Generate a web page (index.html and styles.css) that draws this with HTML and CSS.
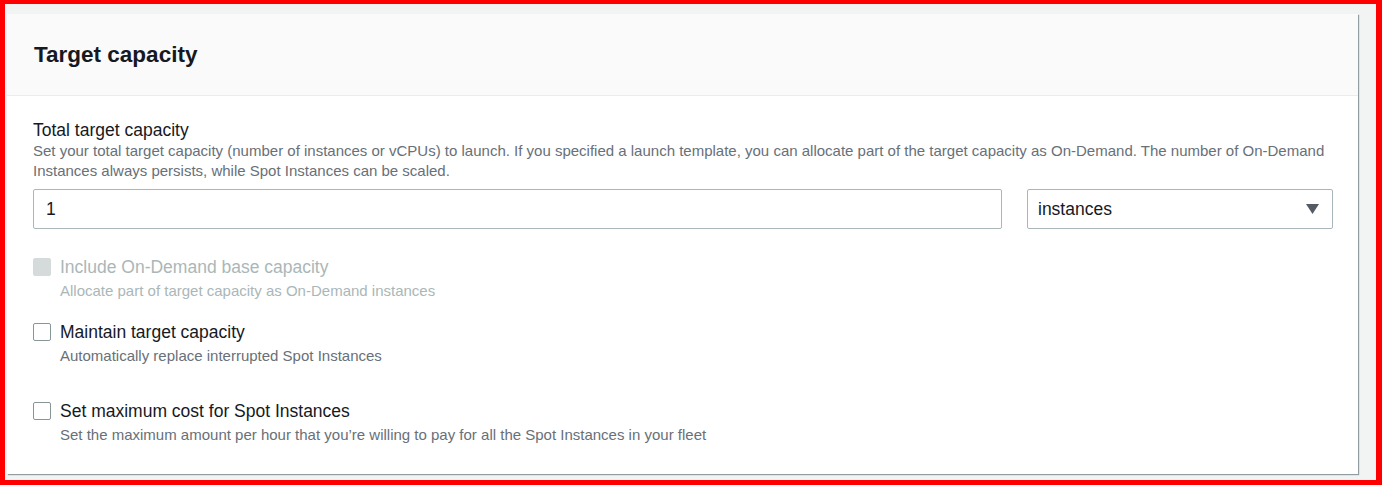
FILE: index.html
```html
<!DOCTYPE html>
<html lang="en">
  <head>
    <meta charset="UTF-8" />
    <meta name="viewport" content="width=device-width, initial-scale=1.0" />
    <title>Spot Fleet - Target capacity</title>
    <link rel="stylesheet" href="styles.css">
  </head>
  <body>
    <div class="frame">
      <div class="panel">
        <div class="panel-header">
          <h2 class="panel-title">Target capacity</h2>
        </div>
        <div class="panel-body">
          <div class="field">
            <label class="field-label" for="capacity">Total target capacity</label>
            <p class="field-desc">
              Set your total target capacity (number of instances or vCPUs) to launch. If you specified a launch template, you can allocate part of the target capacity as On-Demand. The number of On-Demand Instances always persists, while Spot Instances can be scaled.
            </p>
            <div class="field-controls">
              <input id="capacity" class="text-input" type="text" value="1" />
              <div class="select">
                <span>instances</span>
                <svg class="select-caret" width="13" height="10" viewBox="0 0 13 10">
                  <path d="M0 0 H13 L6.5 10 Z" fill="#545b64" />
                </svg>
              </div>
            </div>
          </div>

          <div class="check-row is-disabled">
            <span class="checkbox"></span>
            <div class="check-text">
              <div class="check-label">Include On-Demand base capacity</div>
              <div class="check-desc">Allocate part of target capacity as On-Demand instances</div>
            </div>
          </div>

          <div class="check-row">
            <span class="checkbox"></span>
            <div class="check-text">
              <div class="check-label">Maintain target capacity</div>
              <div class="check-desc">Automatically replace interrupted Spot Instances</div>
            </div>
          </div>

          <div class="check-row check-row--spaced">
            <span class="checkbox"></span>
            <div class="check-text">
              <div class="check-label">Set maximum cost for Spot Instances</div>
              <div class="check-desc">Set the maximum amount per hour that you’re willing to pay for all the Spot Instances in your fleet</div>
            </div>
          </div>
        </div>
      </div>
    </div>
  </body>
</html>
```

FILE: styles.css
```css
:root {
  --clr-text: #16191f;
  --clr-muted: #687078;
  --clr-disabled: #aab7b8;
  --clr-border: #aab7b8;
  --clr-page: #f2f3f3;
}

* {
  margin: 0;
  padding: 0;
  box-sizing: border-box;
}

body {
  font-family: "Liberation Sans", Arial, "Helvetica Neue", sans-serif;
  color: var(--clr-text);
  background-color: var(--clr-page);
}

.frame {
  height: 485px;
  border-style: solid;
  border-color: #ff0000;
  border-width: 4px 6px 5px 5px;
  padding: 10px 18px 0 2px;
  background-color: var(--clr-page);
}

.panel {
  height: 460px;
  background-color: #fff;
  box-shadow: 1px 1px 1px 0 rgba(0, 28, 36, 0.4);
}

.panel-header {
  height: 82px;
  display: flex;
  align-items: center;
  padding: 0 27px;
  background-color: #fafafa;
  border-bottom: 1px solid #eaeded;
}

.panel-title {
  font-size: 22.5px;
  font-weight: bold;
  line-height: 28px;
}

.panel-body {
  padding: 23px 25px 30px 26px;
}

.field-label {
  display: block;
  font-size: 17.5px;
  line-height: 22px;
}

.field-desc {
  font-size: 15px;
  line-height: 20px;
  color: var(--clr-muted);
}

.field-controls {
  display: flex;
  gap: 25px;
  margin-top: 8px;
  margin-bottom: 27px;
}

.text-input {
  flex: 1;
  height: 40px;
  padding: 0 12px;
  font-family: inherit;
  font-size: 17.5px;
  color: var(--clr-text);
  border: 1px solid var(--clr-border);
  border-radius: 2px;
  outline: none;
}

.select {
  width: 306px;
  height: 40px;
  display: flex;
  align-items: center;
  justify-content: space-between;
  padding: 0 13px 0 10px;
  font-size: 17.5px;
  border: 1px solid var(--clr-border);
  border-radius: 2px;
}

.check-row {
  display: flex;
  gap: 9px;
  margin-bottom: 20px;
}

.check-row--spaced {
  margin-top: 34px;
  margin-bottom: 0;
}

.checkbox {
  width: 18px;
  height: 18px;
  margin-top: 2px;
  border: 1px solid #879596;
  border-radius: 2px;
  background-color: #fff;
}

.check-label {
  font-size: 17.5px;
  line-height: 22px;
}

.check-desc {
  margin-top: 3px;
  font-size: 15px;
  line-height: 20px;
  color: var(--clr-muted);
}

.is-disabled .checkbox {
  background-color: #d5dbdb;
  border-color: #d5dbdb;
}

.is-disabled .check-label,
.is-disabled .check-desc {
  color: var(--clr-disabled);
}
```
